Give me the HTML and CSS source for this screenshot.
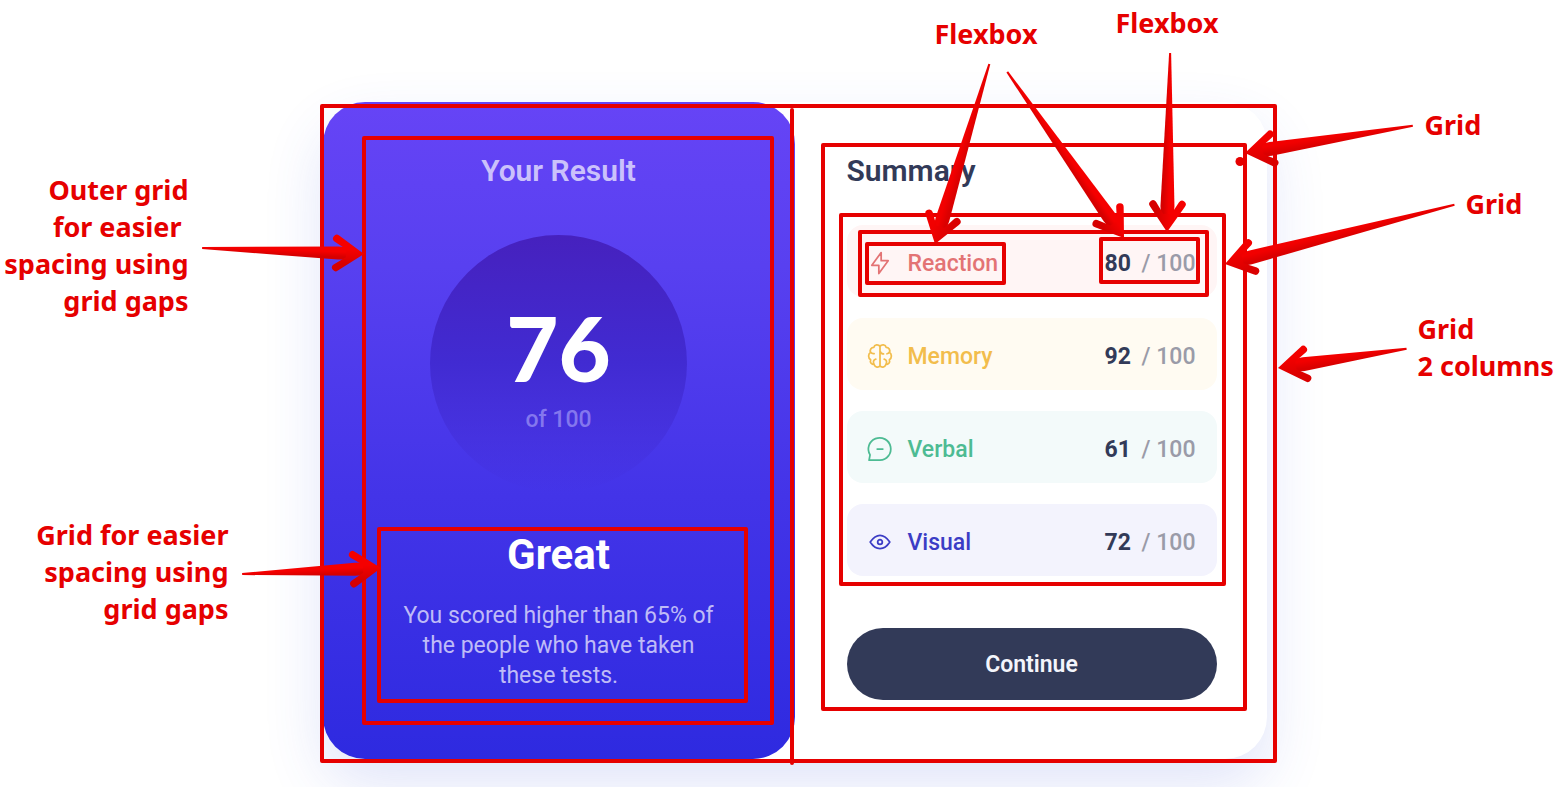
FILE: index.html
```html
<!DOCTYPE html>
<html lang="en">
<head>
<meta charset="utf-8">
<title>Results summary layout</title>
<link rel="stylesheet" href="styles.css">
</head>
<body>
<main class="card">
  <section class="result">
    <h1 class="result-title">Your Result</h1>
    <div class="circle">
      <span class="circle-score">76</span>
      <span class="circle-total">of 100</span>
    </div>
    <div class="verdict">
      <h2 class="verdict-title">Great</h2>
      <p class="verdict-text">You scored higher than 65% of the people who have taken these tests.</p>
    </div>
  </section>
  <section class="summary">
    <h2 class="summary-title">Summary</h2>
    <ul class="items">
      <li class="item reaction">
        <svg class="icon" viewBox="0 0 20 20"><path d="M10.833 8.333V2.5l-6.666 9.167h5V17.5l6.666-9.167h-5Z"/></svg>
        <span class="name">Reaction</span>
        <span class="score"><b class="value">80</b> / 100</span>
      </li>
      <li class="item memory">
        <svg class="icon" viewBox="0 0 20 20"><path d="M10 2.600V17.400M10 3.200C8.800 1.400 6 1.700 5.600 3.800C3.600 3.800 2.500 5.800 3.300 7.300C1.400 8.500 1.400 11.500 3.300 12.700C2.600 14.700 4 16.200 5.900 16.200C6.600 18.300 9 18.500 10 17M10 3.200C11.200 1.400 14 1.700 14.400 3.800C16.400 3.800 17.500 5.800 16.700 7.300C18.600 8.500 18.600 11.500 16.700 12.700C17.400 14.700 16 16.200 14.100 16.200C13.400 18.300 11 18.500 10 17M3.300 7.300C4 8.200 4.800 8.500 5.800 8.300M16.700 7.300C16.200 8 15.600 8.300 15 8.400M5.900 16.200C4.800 14.500 5.200 12.600 7 12.200M14.100 16.200C15.200 14.500 14.800 12.600 13 12.200M10 6.500C10.500 7.800 11.500 8.500 12.500 8.500"/></svg>
        <span class="name">Memory</span>
        <span class="score"><b class="value">92</b> / 100</span>
      </li>
      <li class="item verbal">
        <svg class="icon" viewBox="0 0 20 20"><path d="M8 10h4M10 18H2.2l.7-3.8A8 8 0 1 1 10 18Z"/></svg>
        <span class="name">Verbal</span>
        <span class="score"><b class="value">61</b> / 100</span>
      </li>
      <li class="item visual">
        <svg class="icon" viewBox="0 0 20 20"><path d="M10 11.667a1.667 1.667 0 1 0 0-3.334 1.667 1.667 0 0 0 0 3.334ZM17 10c-1.574 2.492-4 4.700-7 4.700s-5.426-2.208-7-4.700C4.716 7.632 6.860 5.300 10 5.300s5.284 2.332 7 4.700Z"/></svg>
        <span class="name">Visual</span>
        <span class="score"><b class="value">72</b> / 100</span>
      </li>
    </ul>
    <button class="continue" type="button">Continue</button>
  </section>

  <aside class="notes">
    <svg class="marks" viewBox="0 0 1565 787" aria-hidden="true">
      <defs>
        <path id="head" d="M0 0 L-25.500 -17.500 A3.500 3.500 0 0 0 -30 -11.500 L-18 -4 V4 L-30 11.500 A3.500 3.500 0 0 0 -25.500 17.500 Z"/>
        <linearGradient id="ink" x1="0" y1="0" x2="0" y2="1">
          <stop offset="0.4" stop-color="#f50000"/>
          <stop offset="0.8" stop-color="#d60000"/>
        </linearGradient>
        <linearGradient id="ink-side" x1="0" y1="0" x2="0" y2="1">
          <stop offset="0.2" stop-color="#da0000"/>
          <stop offset="0.7" stop-color="#f20000"/>
        </linearGradient>
      </defs>
      <g class="boxes">
        <rect x="322" y="106" width="953" height="655"/>
        <path d="M792 110V763"/>
        <rect x="364" y="138" width="408" height="585"/>
        <rect x="379" y="529" width="367" height="172"/>
        <rect x="823" y="145" width="422" height="564"/>
        <rect x="841" y="215" width="383" height="369"/>
        <rect x="860" y="232" width="347" height="63"/>
        <rect x="867" y="244" width="137" height="39"/>
        <rect x="1101" y="239" width="97" height="43"/>
      </g>
      <g class="arrows">
        <g transform="translate(364 254) rotate(2.1)" fill="url(#ink)"><path d="M-162 -1L-26 -6.500L-10 -6V6L-26 6.500L-162 1Z"/><use href="#head"/></g>
        <g transform="translate(381 568) rotate(-2.5)" fill="url(#ink)"><path d="M-139 -1L-26 -6.500L-10 -6V6L-26 6.500L-139 1Z"/><use href="#head"/></g>
        <g transform="translate(935 244) rotate(106.8)" fill="url(#ink-side)"><path d="M-188 -1L-26 -7L-10 -6V6L-26 7L-188 1Z"/><use href="#head"/></g>
        <g transform="translate(1124 238) rotate(54.9)" fill="url(#ink)"><path d="M-203 -1L-26 -7L-10 -6V6L-26 7L-203 1Z"/><use href="#head"/></g>
        <g transform="translate(1167 232) rotate(91)" fill="url(#ink)"><path d="M-179 -1L-26 -7L-10 -6V6L-26 7L-179 1Z"/><use href="#head"/></g>
        <g transform="translate(1245 153) rotate(170.8)" fill="url(#ink-side)"><path d="M-170 -1L-26 -7L-10 -6V6L-26 7L-170 1Z"/><use href="#head"/></g>
        <g transform="translate(1225 264) rotate(165.5)" fill="url(#ink-side)"><path d="M-237 -1L-26 -7L-10 -6V6L-26 7L-237 1Z"/><use href="#head"/></g>
        <g transform="translate(1278 368) rotate(171.5)" fill="url(#ink-side)"><path d="M-130 -1L-26 -7L-10 -6V6L-26 7L-130 1Z"/><use href="#head"/></g>
        <circle cx="1240" cy="161.500" r="4.500"/>
      </g>
    </svg>
    <p class="note note-outer">Outer grid
for easier 
spacing using
grid gaps</p>
    <p class="note note-inner">Grid for easier
spacing using
grid gaps</p>
    <p class="note note-flex-a">Flexbox</p>
    <p class="note note-flex-b">Flexbox</p>
    <p class="note note-grid-a">Grid</p>
    <p class="note note-grid-b">Grid</p>
    <p class="note note-columns">Grid
2 columns</p>
  </aside>
</main>
</body>
</html>
```

FILE: styles.css
```css
* {
  box-sizing: border-box;
}

body {
  margin: 0;
  padding: 102px 24px 28px 48px;
  background: #fff;
  font-family: Roboto, "Liberation Sans", sans-serif;
  overflow: hidden;
}

h1, h2, p, ul {
  margin: 0;
  padding: 0;
}

.card {
  position: relative;
  display: grid;
  grid-template-columns: 1fr 1fr;
  max-width: 944px;
  margin: 0 auto;
  border-radius: 42px;
  background: #fff;
  box-shadow: 0 26px 60px rgba(61, 90, 220, 0.16);
}

.result {
  display: flex;
  flex-direction: column;
  align-items: center;
  padding: 51px 72px 60px;
  border-radius: 42px;
  background: linear-gradient(#6644f6, #5840f0 25%, #4334e8 60%, #2e2ae0);
  color: #fff;
  text-align: center;
}

.result-title,
.summary-title {
  font-size: 30px;
  line-height: 36px;
  font-weight: 600;
}

.result-title {
  color: #cbc1fb;
}

.circle {
  display: flex;
  flex-direction: column;
  align-items: center;
  justify-content: center;
  gap: 8px;
  width: 257px;
  height: 257px;
  margin: 46px 0 39px;
  padding-top: 4px;
  border-radius: 50%;
  background: linear-gradient(#4621be, #412bd2 50%, rgba(67, 52, 232, 0));
}

.circle-score {
  font-family: Lato, sans-serif;
  font-size: 90px;
  line-height: 100px;
  font-weight: 900;
}

.circle-total {
  font-size: 23px;
  line-height: 30px;
  font-weight: 500;
  color: #8477ee;
}

.verdict {
  display: grid;
  gap: 22px;
}

.verdict-title {
  font-size: 42px;
  line-height: 48px;
  font-weight: 700;
}

.verdict-text {
  font-size: 23px;
  line-height: 30px;
  color: #bfbbf7;
}

.summary {
  display: flex;
  flex-direction: column;
  padding: 51px 50px 59px 52px;
}

.summary-title {
  color: #323a58;
}

.items {
  display: grid;
  gap: 21px;
  margin: 36px 0 52px;
  list-style: none;
}

.item {
  display: flex;
  align-items: center;
  height: 72px;
  padding: 4px 21px 0 19px;
  border-radius: 16px;
  font-size: 23px;
  font-weight: 500;
}

.reaction { background: #fff5f5; color: #e37374; }
.memory { background: #fffbf2; color: #f2bd4c; }
.verbal { background: #f3fafa; color: #4dbb93; }
.visual { background: #f3f3fd; color: #3b3cc5; }

.icon {
  width: 28px;
  height: 28px;
  margin-right: 14px;
  fill: none;
  stroke: currentColor;
  stroke-width: 1.25;
  stroke-linecap: round;
  stroke-linejoin: round;
}

.score {
  margin-left: auto;
  color: #9a9ba8;
}

.value {
  margin-right: 5px;
  font-weight: 700;
  color: #323a58;
}

.continue {
  height: 72px;
  border: 0;
  border-radius: 36px;
  background: #323a58;
  color: #f4f5fb;
  font-family: inherit;
  font-size: 23px;
  font-weight: 600;
}

.notes {
  position: absolute;
  top: -102px;
  left: -323px;
  width: 1565px;
  height: 787px;
  pointer-events: none;
}

.marks {
  display: block;
  width: 100%;
  height: 100%;
}

.boxes {
  fill: none;
  stroke: #e60000;
  stroke-width: 4;
  stroke-linejoin: round;
  stroke-linecap: round;
}

.arrows {
  fill: #e60000;
}

.note {
  position: absolute;
  color: #e60000;
  font-family: "Noto Sans", "Open Sans", sans-serif;
  font-size: 27px;
  line-height: 37px;
  font-weight: 700;
  white-space: pre;
}

.note-outer { top: 171px; right: 1376px; text-align: right; }
.note-inner { top: 516px; right: 1336px; text-align: right; }
.note-flex-a { top: 15px; left: 935px; }
.note-flex-b { top: 4px; left: 1116px; }
.note-grid-a { top: 106px; left: 1425px; }
.note-grid-b { top: 185px; left: 1466px; }
.note-columns { top: 310px; left: 1418px; }
```
